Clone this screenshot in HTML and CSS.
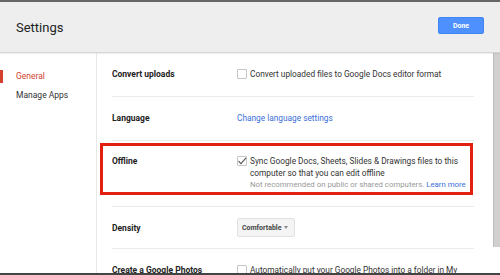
FILE: index.html
```html
<!DOCTYPE html>
<html>
<head>
<meta charset="utf-8">
<link rel="stylesheet" href="styles.css">
</head>
<body>
<div class="frame">
  <header class="header">
    <h1 class="title">Settings</h1>
    <button class="done">Done</button>
  </header>
  <div class="main">
    <nav class="sidebar">
      <div class="nav-item active">General</div>
      <div class="nav-item">Manage Apps</div>
    </nav>
    <section class="content">
      <div class="row">
        <div class="label">Convert uploads</div>
        <div class="control">
          <span class="check"></span>
          <span class="text">Convert uploaded files to Google Docs editor format</span>
        </div>
      </div>
      <div class="row">
        <div class="label">Language</div>
        <div class="control"><a class="link">Change language settings</a></div>
      </div>
      <div class="row offline">
        <div class="label">Offline</div>
        <div class="control">
          <span class="check checked"><svg viewBox="0 0 10 10" width="10" height="10"><path d="M1.5 5.2 L4 7.6 L9 1.8" fill="none" stroke="#555" stroke-width="1.1"/></svg></span>
          <div class="text">
            <div>Sync Google Docs, Sheets, Slides &amp; Drawings files to this computer so that you can edit offline</div>
            <div class="note">Not recommended on public or shared computers. <a class="link">Learn more</a></div>
          </div>
        </div>
        <div class="highlight"></div>
      </div>
      <div class="row density">
        <div class="label">Density</div>
        <div class="control">
          <div class="dropdown">Comfortable <span class="arrow"></span></div>
        </div>
      </div>
      <div class="row">
        <div class="label">Create a Google Photos</div>
        <div class="control">
          <span class="check"></span>
          <span class="text">Automatically put your Google Photos into a folder in My Drive</span>
        </div>
      </div>
    </section>
    <div class="scrollbar"></div>
  </div>
</div>
</body>
</html>
```

FILE: styles.css
```css
* { box-sizing: border-box; }
html, body { margin: 0; padding: 0; background: #fff; }
body { font-family: Roboto, "Liberation Sans", Arial, sans-serif; color: #222; }

.frame {
  width: 500px;
  height: 275px;
  border-top: 2px solid #666;
  border-bottom: 2px solid #444;
  overflow: hidden;
  display: flex;
  flex-direction: column;
}

.header {
  height: 51px;
  flex: none;
  background: #eeeeee;
  border-bottom: 1px solid #d6d6d6;
  box-shadow: 0 1px 1px rgba(0,0,0,0.06);
  display: flex;
  align-items: center;
  justify-content: space-between;
  padding: 0 16px;
  position: relative;
  z-index: 1;
}
.title {
  margin: 0;
  font-size: 13px;
  font-weight: 400;
  color: #222;
}
.done {
  width: 46px;
  height: 17px;
  margin-bottom: 3px;
  padding: 0;
  background: #4d90fe;
  border: 1px solid #3f83f5;
  border-radius: 2px;
  color: #fff;
  font-family: inherit;
  font-size: 7px;
  font-weight: 700;
}

.main {
  flex: 1;
  display: flex;
  position: relative;
  min-height: 0;
}

.sidebar {
  width: 97px;
  flex: none;
  border-right: 1px solid #e8e8e8;
  padding-top: 14px;
}
.nav-item {
  position: relative;
  height: 19px;
  line-height: 19px;
  padding-left: 16px;
  font-size: 8.5px;
  color: #333;
}
.nav-item.active { color: #d2422f; }
.nav-item.active::before {
  content: "";
  position: absolute;
  left: 0;
  top: 3px;
  bottom: 3px;
  width: 3px;
  background: #d2422f;
}

.content {
  flex: 1;
  padding: 0 26px 0 15px;
  font-size: 8.5px;
}

.row {
  display: flex;
  align-items: flex-start;
  padding: 15px 0 16px;
  line-height: 12px;
  border-bottom: 1px solid #ebebeb;
  position: relative;
}
.row.offline { padding: 14px 0 15px; }
.row.density { padding: 11px 0; align-items: center; }

.label {
  width: 125px;
  flex: none;
  font-weight: 700;
  color: #222;
}
.control {
  display: flex;
  align-items: flex-start;
  flex: 1;
  min-width: 0;
  color: #333;
  font-size: 8.3px;
}
.check {
  flex: none;
  width: 10px;
  height: 10px;
  margin: 1px 3px 0 0;
  border: 1px solid #c6c6c6;
  border-radius: 1px;
  background: #fff;
  position: relative;
}
.check svg { position: absolute; left: -1px; top: -1px; }
.row:last-child .text { padding-right: 10px; }
.note { color: #999; font-size: 7.8px; }
.link { color: #3b6fd8; text-decoration: none; }

.dropdown {
  height: 19px;
  padding: 0 6px 0 4px;
  background: #f4f4f4;
  border: 1px solid #e2e2e2;
  border-radius: 2px;
  font-size: 7px;
  font-weight: 700;
  color: #444;
  display: flex;
  align-items: center;
  gap: 3px;
}
.arrow {
  width: 0;
  height: 0;
  border-left: 2.5px solid transparent;
  border-right: 2.5px solid transparent;
  border-top: 3px solid #888;
}

.highlight {
  position: absolute;
  left: -12px;
  right: 1px;
  top: 2px;
  height: 52px;
  border: 3px solid #e2200f;
  pointer-events: none;
}

.scrollbar {
  position: absolute;
  right: 0;
  top: 0;
  width: 7px;
  height: 194px;
  background: #d0d0d0;
  border-left: 1px solid #bdbdbd;
}
```
